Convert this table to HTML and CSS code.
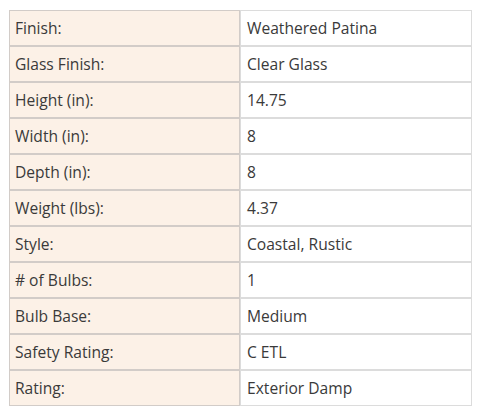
FILE: index.html
```html
<!DOCTYPE html>
<html>
<head>
<meta charset="utf-8">
<link rel="stylesheet" href="styles.css">
</head>
<body>
<table class="specs">
  <tbody>
    <tr><th>Finish:</th><td>Weathered Patina</td></tr>
    <tr><th>Glass Finish:</th><td>Clear Glass</td></tr>
    <tr><th>Height (in):</th><td>14.75</td></tr>
    <tr><th>Width (in):</th><td>8</td></tr>
    <tr><th>Depth (in):</th><td>8</td></tr>
    <tr><th>Weight (lbs):</th><td>4.37</td></tr>
    <tr><th>Style:</th><td>Coastal, Rustic</td></tr>
    <tr><th># of Bulbs:</th><td>1</td></tr>
    <tr><th>Bulb Base:</th><td>Medium</td></tr>
    <tr><th>Safety Rating:</th><td>C ETL</td></tr>
    <tr><th>Rating:</th><td>Exterior Damp</td></tr>
  </tbody>
</table>
</body>
</html>
```
FILE: styles.css
```css
html, body {
  margin: 0;
  padding: 0;
  background: #ffffff;
}
body {
  padding: 10px 0 0 9px;
  font-family: "Open Sans", "Liberation Sans", sans-serif;
}
.specs {
  border-collapse: separate;
  border-spacing: 0;
  width: 463px;
  table-layout: fixed;
}
.specs th,
.specs td {
  padding: 0 5px;
  border: 1px solid #dcdcdc;
  font-size: 15.6px;
  font-weight: normal;
  color: #3a3a3a;
  text-align: left;
  vertical-align: middle;
  box-sizing: border-box;
  height: 36px;
}
.specs th {
  width: 231px;
  background: #fcf1e7;
  border-color: #d2ccc8;
}
.specs td {
  padding-left: 6px;
}
```
